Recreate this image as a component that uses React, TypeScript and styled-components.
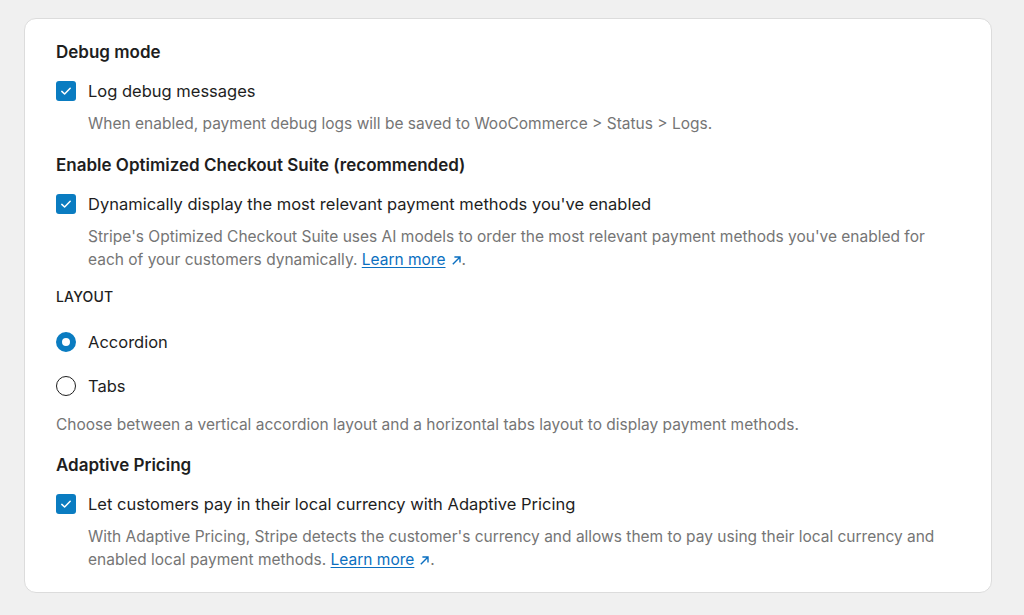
import React from "react";
import styled, { createGlobalStyle } from "styled-components";

const GlobalStyle = createGlobalStyle`
  html, body {
    margin: 0;
    padding: 0;
    background: #f0f0f0;
  }
  body {
    font-family: Inter, "Noto Sans", "Liberation Sans", sans-serif;
    color: #1e1e1e;
    -webkit-font-smoothing: antialiased;
  }
`;

const Page = styled.div`
  padding: 18px 32px 22px 24px;
  background: #f0f0f0;
`;

const Card = styled.div`
  background: #fff;
  border: 1px solid #dcdcdc;
  border-radius: 12px;
  padding: 21px 32px 21px 31px;
`;

const Heading = styled.h3<{ $top?: number }>`
  margin: ${({ $top }) => $top ?? 0}px 0 0;
  font-size: 17px;
  line-height: 24px;
  font-weight: 600;
  color: #1e1e1e;
`;

const SmallCaps = styled.div`
  margin-top: 18px;
  font-size: 14px;
  line-height: 16px;
  font-weight: 500;
  letter-spacing: 0.2px;
  text-transform: uppercase;
  color: #1e1e1e;
`;

const Row = styled.label<{ $top?: number }>`
  display: flex;
  align-items: center;
  gap: 12px;
  margin-top: ${({ $top }) => $top ?? 15}px;
  font-size: 16.5px;
  line-height: 24px;
  color: #1e1e1e;
`;

const Box = styled.span`
  flex: none;
  width: 20px;
  height: 20px;
  border-radius: 3px;
  background: #0a7cc1;
  display: flex;
  align-items: center;
  justify-content: center;
`;

const Radio = styled.span<{ $checked?: boolean }>`
  flex: none;
  box-sizing: border-box;
  width: 20px;
  height: 20px;
  border-radius: 50%;
  background: #fff;
  border: ${({ $checked }) => ($checked ? "6px solid #0a7cc1" : "1.5px solid #1e1e1e")};
`;

const Help = styled.p<{ $indent?: boolean; $top?: number }>`
  margin: ${({ $top }) => $top ?? 9}px 0 0;
  padding-left: ${({ $indent }) => ($indent ? 32 : 0)}px;
  font-size: 15.5px;
  line-height: 23px;
  color: #757575;
`;

const Link = styled.a`
  color: #0b6fc0;
  text-decoration: underline;
  text-underline-offset: 2px;
`;

const Arrow = styled.svg`
  margin-left: 5px;
  vertical-align: -1px;
`;

const Check = () => (
  <Box>
    <svg width="14" height="14" viewBox="0 0 14 14" fill="none">
      <path d="M2.8 7.4l2.8 2.6L11.2 4.2" stroke="#fff" strokeWidth="1.5" strokeLinecap="round" strokeLinejoin="round" />
    </svg>
  </Box>
);

const External = () => (
  <Arrow width="11" height="11" viewBox="0 0 11 11" fill="none">
    <path d="M1.8 9.2L9 2M3.4 2H9v5.6" stroke="#0b6fc0" strokeWidth="1.4" />
  </Arrow>
);

export default function App() {
  return (
    <>
      <GlobalStyle />
      <Page>
        <Card>
          <Heading>Debug mode</Heading>
          <Row>
            <Check />
            Log debug messages
          </Row>
          <Help $indent>When enabled, payment debug logs will be saved to WooCommerce &gt; Status &gt; Logs.</Help>

          <Heading $top={18}>Enable Optimized Checkout Suite (recommended)</Heading>
          <Row>
            <Check />
            Dynamically display the most relevant payment methods you've enabled
          </Row>
          <Help $indent>
            Stripe's Optimized Checkout Suite uses AI models to order the most relevant payment methods you've enabled for
            each of your customers dynamically. <Link href="#">Learn more</Link>
            <External />.
          </Help>

          <SmallCaps>Layout</SmallCaps>
          <Row $top={25}>
            <Radio $checked />
            Accordion
          </Row>
          <Row $top={20}>
            <Radio />
            Tabs
          </Row>
          <Help $top={15}>
            Choose between a vertical accordion layout and a horizontal tabs layout to display payment methods.
          </Help>

          <Heading $top={17}>Adaptive Pricing</Heading>
          <Row>
            <Check />
            Let customers pay in their local currency with Adaptive Pricing
          </Row>
          <Help $indent>
            With Adaptive Pricing, Stripe detects the customer's currency and allows them to pay using their local currency
            and enabled local payment methods. <Link href="#">Learn more</Link>
            <External />.
          </Help>
        </Card>
      </Page>
    </>
  );
}
